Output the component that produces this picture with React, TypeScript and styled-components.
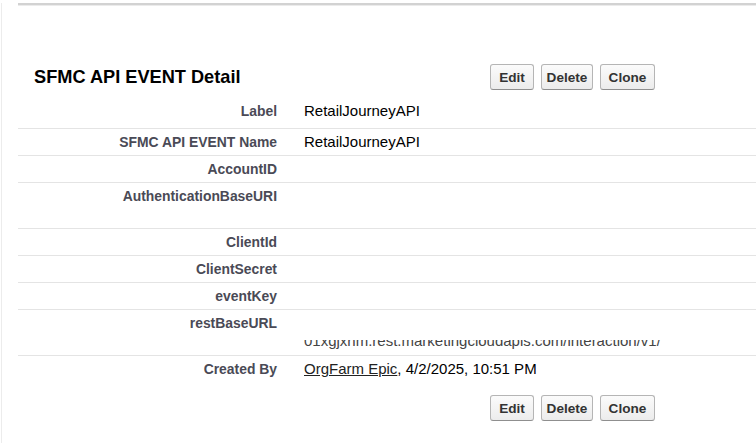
import styled, { createGlobalStyle } from 'styled-components'

const GlobalStyle = createGlobalStyle`
  html, body {
    margin: 0;
    padding: 0;
    background: #ffffff;
  }
  body {
    font-family: 'Liberation Sans', Arial, sans-serif;
    color: #000000;
  }
`

type Field = {
  label: string
  value?: string
  lines?: number
  clipped?: string
}

const fields: Field[] = [
  { label: 'Label', value: 'RetailJourneyAPI' },
  { label: 'SFMC API EVENT Name', value: 'RetailJourneyAPI' },
  { label: 'AccountID' },
  { label: 'AuthenticationBaseURI', lines: 2 },
  { label: 'ClientId' },
  { label: 'ClientSecret' },
  { label: 'eventKey' },
  {
    label: 'restBaseURL',
    lines: 2,
    clipped: '01xgjxhm.rest.marketingcloudapis.com/interaction/v1/',
  },
]

const buttons = [
  { text: 'Edit', width: 44 },
  { text: 'Delete', width: 52 },
  { text: 'Clone', width: 55 },
]

const ButtonBar = () => (
  <Buttons>
    {buttons.map((b) => (
      <Btn key={b.text} $w={b.width}>
        {b.text}
      </Btn>
    ))}
  </Buttons>
)

const App = () => {
  return (
    <>
      <GlobalStyle />
      <Page>
        <TopRule />
        <Block>
          <Header>
            <Title>SFMC API EVENT Detail</Title>
            <ButtonBar />
          </Header>
          {fields.map((f, i) => (
            <Row key={f.label} $first={i === 0}>
              <LabelCol>{f.label}</LabelCol>
              <ValueCol $lines={f.lines ?? 1}>
                <ValueLine>{f.value ?? '\u00a0'}</ValueLine>
                {f.clipped && (
                  <ClipLine>
                    <ClipText>{f.clipped}</ClipText>
                  </ClipLine>
                )}
              </ValueCol>
            </Row>
          ))}
          <Row $last>
            <LabelCol>Created By</LabelCol>
            <ValueCol $lines={1}>
              <UserLink>OrgFarm Epic</UserLink>, 4/2/2025, 10:51 PM
            </ValueCol>
          </Row>
          <Footer>
            <ButtonBar />
          </Footer>
        </Block>
      </Page>
    </>
  )
}

const Page = styled.div`
  margin-left: 1px;
  min-height: 443px;
  border-left: 1px solid #ececec;
  box-sizing: border-box;
`

const TopRule = styled.div`
  margin: 3px 0 0 16px;
  border-top: 2px solid #d2d2d2;
  border-bottom: 1px solid #ebebeb;
`

const Block = styled.div`
  margin-left: 16px;
`

const Header = styled.div`
  display: flex;
  align-items: center;
  padding: 58px 0 8px 16px;
`

const Title = styled.h2`
  flex: none;
  width: 456px;
  margin: 0;
  font-size: 18.2px;
  font-weight: bold;
  line-height: 24px;
  color: #000000;
`

const Buttons = styled.div`
  display: flex;
  gap: 7px;
`

const Btn = styled.button<{ $w: number }>`
  width: ${(p) => p.$w}px;
  height: 26px;
  padding: 0;
  box-sizing: border-box;
  font-family: 'Liberation Sans', Arial, sans-serif;
  font-size: 13.6px;
  font-weight: bold;
  color: #333333;
  background: linear-gradient(#fbfbfb, #ececec);
  border: 1px solid #b5b5b5;
  border-bottom-color: #8f8f8f;
  border-radius: 3px;
  cursor: pointer;
`

const Row = styled.div<{ $first?: boolean; $last?: boolean }>`
  display: grid;
  grid-template-columns: 259px 1fr;
  padding-bottom: ${(p) => (p.$first ? 4 : 0)}px;
  border-bottom: ${(p) => (p.$last ? 'none' : '1px solid #e4e4e4')};
`

const LabelCol = styled.div`
  padding: 4px 0;
  text-align: right;
  font-size: 13.9px;
  font-weight: bold;
  line-height: 18px;
  color: #4a4a56;
`

const ValueCol = styled.div<{ $lines: number }>`
  min-height: ${(p) => (p.$lines > 1 ? p.$lines * 18 + 1 : 18)}px;
  padding: 4px 0 4px 27px;
  font-size: 15px;
  line-height: 18px;
  color: #000000;
`

const ValueLine = styled.div`
  min-height: 18px;
`

const ClipLine = styled.div`
  height: 10px;
  margin-top: 8px;
  overflow: hidden;
`

const ClipText = styled.div`
  margin-top: -8px;
  line-height: 18px;
  white-space: nowrap;
  color: #444444;
`

const UserLink = styled.a`
  color: #222222;
  text-decoration: underline;
`

const Footer = styled.div`
  padding: 13px 0 0 472px;
`

export default App
